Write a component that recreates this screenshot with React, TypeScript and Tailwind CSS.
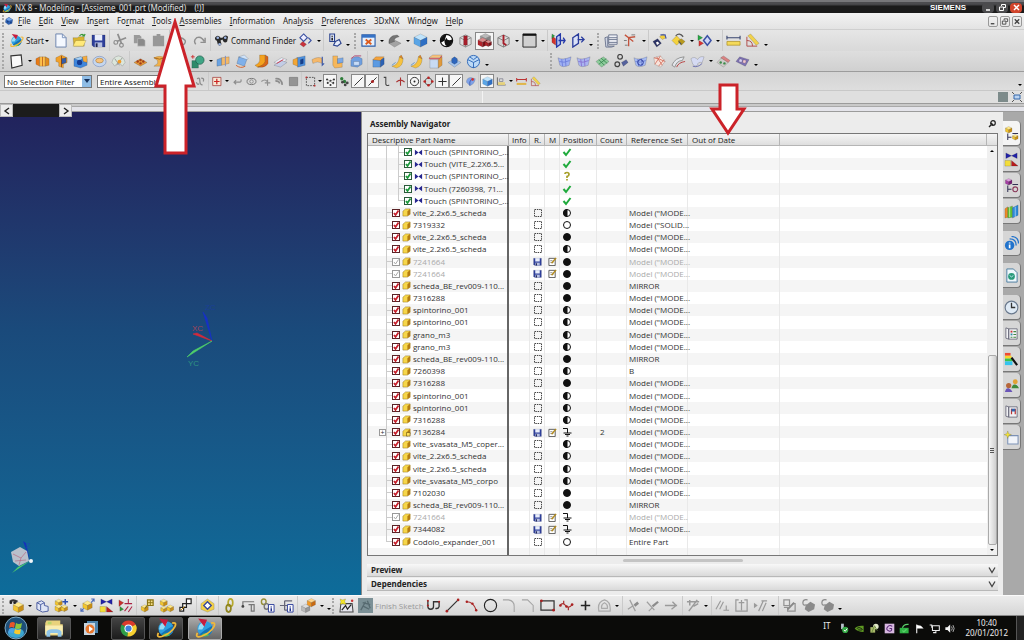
import { ReactNode } from "react";
import clsx from "clsx";

const BLUE = ["#bfe3fb", "#5aa5e6", "#2e6fc4"];
const GOLD = ["#ffe98a", "#f3c52e", "#c98f14"];
const ORANGE = ["#ffd48a", "#f59a23", "#c96a10"];
const GRAY = ["#b9b9b9", "#9b9b9b", "#858585"];
const RED = ["#d98b8b", "#b3232b", "#7d1219"];

function cube(x: number, y: number, s: number, [top, left, right]: string[]) {
  const h = s / 2;
  return (
    <g stroke="#00000055" strokeWidth="0.4">
      <path fill={top} d={`M${x} ${y - s}L${x + s} ${y - h}L${x} ${y}L${x - s} ${y - h}Z`} />
      <path fill={left} d={`M${x - s} ${y - h}L${x} ${y}V${y + s}L${x - s} ${y + h}Z`} />
      <path fill={right} d={`M${x + s} ${y - h}L${x} ${y}V${y + s}L${x + s} ${y + h}Z`} />
    </g>
  );
}

function line(d: string, stroke = "#333", strokeWidth = 1.2, fill = "none") {
  return <path d={d} stroke={stroke} strokeWidth={strokeWidth} fill={fill} />;
}

function fill(d: string, color: string) {
  return <path d={d} fill={color} stroke="#00000066" strokeWidth="0.4" />;
}

function dots(points: number[][], color: string, r = 1.1) {
  return points.map(([x, y]) => <circle key={`${x}-${y}`} cx={x} cy={y} r={r} fill={color} />);
}

const sheet = (a: string, b: string) => (
  <>
    {fill("M1 4Q6 7 15 3L13 12Q6 15 3 12Z", a)}
    {line("M5 5.5L6 13M9 5L9.500 13M2.500 8Q7 10 13.500 7", b, 0.9)}
  </>
);

const icons: Record<string, ReactNode> = {
  nx: (
    <>
      <circle cx="8" cy="8.500" r="5.500" fill="#2d9fe0" />
      <path d="M4 12.500Q8 9 13 6.500Q14.500 12 9.500 13.800Q6 14.500 4 12.500Z" fill="#1571b5" />
      <path d="M4.500 5Q7 3 9 4L6 9L3 9Q3 6.500 4.500 5Z" fill="#9adcf5" />
      <path d="M5 13.500Q8 10 11 13Q8 15 5 13.500Z" fill="#4fbf57" />
      <path d="M3 1L9.500 2L7.500 7Z" fill="#c51d3e" />
      <path d="M12.500 4.500Q16 3.500 14.500 7Q12 11.500 5.500 14Q0.500 15.500 2.500 11.500" stroke="#f0b93a" strokeWidth="1.300" fill="none" />
    </>
  ),
  part: (
    <>
      {fill("M3 5L8 2L14 6L13 12L7 14L2 10Z", "#2d62b5")}
      {fill("M3 5L8 2L14 6L8 8Z", "#77aaf0")}
      {dots([[6, 9], [11, 10]], "#183d80", 1.4)}
    </>
  ),
  new: (
    <>
      {fill("M3 1H10L14 5V15H3Z", "#f4f8ff")}
      {line("M3 1H10L14 5V15H3ZM10 1V5H14", "#7b93bd", 1)}
    </>
  ),
  open: (
    <>
      {fill("M1 5H6L7 4H13V14H2Z", "#d9b431")}
      {fill("M4 8H15L12 14H1Z", "#ffe97a")}
      {line("M8 3Q11 0 13 3L14 1M13 3H11", "#3a9a3a", 1.3)}
    </>
  ),
  save: (
    <>
      {fill("M1 2H15V15H3L1 13Z", "#2e3f9a")}
      <path d="M4 2H12V8H4Z" fill="#e9eefb" />
      <path d="M4 10H12V15H4Z" fill="#b6bfe0" />
      <path d="M5 11H7V15H5Z" fill="#1c2350" />
    </>
  ),
  cut: (
    <>
      {line("M5 1L9 11M14 5L4 9", "#8e8e8e", 1.8)}
      <circle cx="3" cy="10" r="2" stroke="#8e8e8e" strokeWidth="1.300" fill="none" />
      <circle cx="9" cy="13" r="2" stroke="#8e8e8e" strokeWidth="1.300" fill="none" />
    </>
  ),
  copy: (
    <>
      <path d="M2 2H8L10 4V11H2Z" fill="#9a9a9a" />
      <path d="M6 6H12L14 8V14H6Z" fill="#8a8a8a" stroke="#ccc" strokeWidth="0.500" />
    </>
  ),
  paste: <path d="M2 3H6V1H10V3H14V14H2Z" fill="#979797" />,
  undo: line("M3 4V8H7M3 8Q8 2 13 8Q14 11 10 13", "#8e8e8e", 1.5),
  redo: line("M14 5V10H9M13 9Q10 3 5 5Q1 8 4 12", "#8e8e8e", 1.5),
  binoculars: (
    <>
      <path d="M1 5Q4 1 7 5H9Q12 1 15 4L14 9Q12 11 10 9L9 7L7 8L8 12Q6 15 4 12L3 8Q1 8 1 5Z" fill="#2a2a2a" />
      {dots([[4, 5], [12, 5], [6, 12]], "#9db4e0", 1.4)}
    </>
  ),
  diamonds: (
    <>
      {line("M6 1L10 5L6 9L2 5Z", "#3a4fa0", 1.2, "#eef")}
      {line("M11 5L14 8L11 11", "#3a4fa0", 1.2)}
      {fill("M5 9L9 12L6 15L2 12Z", "#c8323c")}
    </>
  ),
  info: (
    <>
      {line("M3 1H8V9H3ZM9 9L13 7L15 11L11 14L7 13Z", "#28408c", 1.2, "#e6ecfa")}
      {line("M5.500 3V4M5.500 5V8", "#111", 1.6)}
    </>
  ),
  fit: (
    <>
      <path d="M1 2H15V14H1Z" fill="#e8f1fc" stroke="#2b5ca8" strokeWidth="1.200" />
      <path d="M1 2H15V5H1Z" fill="#3572c6" />
      {line("M5 7L11 12M11 7L5 12", "#dd5a1c", 2)}
    </>
  ),
  shade: (
    <>
      {fill("M2 11L9 8L15 11L8 15Z", "#a3a3a3")}
      {fill("M2 11Q1 6 6 3L11 2L13 4Q7 5 8 9Z", "#747474")}
    </>
  ),
  blueCube: cube(8, 8, 7, BLUE),
  ball: (
    <>
      <circle cx="8" cy="8" r="6.500" fill="#fff" stroke="#111" strokeWidth="1.300" />
      <path d="M8 1.500A6.500 6.500 0 0 0 2 10Q6 9 8 5Q9 9 14 7A6.500 6.500 0 0 1 9 14.500Q5 12 6 8Z" fill="#111" />
    </>
  ),
  clip: (
    <>
      {line("M2 5L8 2L14 5V12L8 15L2 12ZM2 5L8 8L14 5M8 8V15", "#888", 0.9, "#ddd")}
      {fill("M6 3H10V13H6Z", "#a81e2a")}
    </>
  ),
  clipRed: (
    <>
      {cube(9, 6, 5.5, GRAY)}
      {cube(6, 10, 5, RED)}
      {cube(12, 11, 3.5, RED)}
    </>
  ),
  clipAxis: (
    <>
      {line("M2 5L8 2L14 5V12L8 15L2 12ZM2 5L8 8L14 5M8 8V15", "#777", 0.9, "#d4d4d4")}
      {line("M8 2V11L11 13", "#a81e2a", 2)}
    </>
  ),
  window: (
    <>
      <path d="M1 1H15V15H1Z" fill="#d0d0d0" stroke="#222" />
      <path d="M1 1H15V3H1Z" fill="#111" />
    </>
  ),
  planeRed: (
    <>
      {fill("M1 3L5 6V13L1 10Z", "#d5342c")}
      {fill("M1 1L4 3L1 6Z", "#2ea043")}
      {line("M6 4L10 1V12L6 15ZM8 8H15M13 5L15 8L13 11", "#2438a8", 1.4, "#b9c6f2")}
    </>
  ),
  plane: line("M3 5L9 1V11L3 15ZM8 7H15M12 4L15 7L12 10", "#2a3c9c", 1.4, "#dbe2f7"),
  layers: (
    <>
      {line("M5 2H14V12H5ZM5 5H14M5 7H14M5 10H14", "#6d7690", 1, "#eef0f6")}
      {line("M1 5L4 4V14H11L8 15H2Z", "#6d7690", 1, "#cfd5e3")}
    </>
  ),
  csys: (
    <>
      {line("M6 14V5L13 4M6 5L2 2M6 5L11 9", "#c4533c", 1.4)}
      {line("M9 2H13M1 8H4M2 13H5", "#777", 1)}
    </>
  ),
  hide: (
    <>
      {fill("M1 9L6 6L10 11L5 15Z", "#2a3166")}
      {fill("M4 10L6 9L8 11L5.500 13Z", "#fff")}
      {fill("M8 4L12 1L15 5L11 7Z", "#f1cf3e")}
      {line("M9 2L14 2L15 6", "#4456a8", 1.2)}
    </>
  ),
  show: (
    <>
      {fill("M1 8L6 3L11 8L6 13Z", "#f4d23e")}
      {fill("M8 8L11 6L15 9L11 13Z", "#b99a1e")}
      {line("M5 3Q9 -1 13 4M8 9L11 12", "#555", 1.3)}
    </>
  ),
  move: (
    <>
      {fill("M1 2L6 5L1 8Z", "#28a745")}
      {fill("M2 8L7 11L2 14Z", "#d33")}
      {line("M11 3L15 8L11 13L7 8Z", "#3c51a5", 1.6, "#cfd8f6")}
    </>
  ),
  measure: (
    <>
      <path d="M1 9H15V13H1Z" fill="#f4da5a" stroke="#a98a1a" strokeWidth="0.700" />
      {line("M1 5H15M1 3V7M15 3V7", "#3a4670", 1.2)}
    </>
  ),
  angle: (
    <>
      {fill("M3 3L6 1L15 11L12 13Z", "#f1d24c")}
      {line("M2 4V14H13M2 8Q8 8 8 14", "#b04a48", 1)}
    </>
  ),
  sketch: line("M2 2L13 1L14 12L3 15Z", "#333", 1.2, "#fafafa"),
  extrude: (
    <>
      {fill("M1 5L5 3V13L1 11Z", "#e87a16")}
      {fill("M5 3H11V13H5Z", "#ffc04a")}
      {fill("M11 3L15 5V12L11 13Z", "#e08a1c")}
      {line("M8 3V13", "#b3541a", 0.8)}
    </>
  ),
  revolve: (
    <>
      {fill("M2 4L8 1L14 4V9L10 11V15L5 13V9L2 8Z", "#f2a12a")}
      {fill("M8 5L13 4V9L8 11Z", "#355ca8")}
      {line("M8 2V14", "#7a3a10", 0.8)}
    </>
  ),
  block: (
    <>
      {fill("M1 5L8 3L15 5V12L8 15L1 13Z", "#3f86dc")}
      {fill("M1 5L8 3L11 4L7 7Z", "#a9d2f6")}
      <circle cx="7" cy="9" r="2.800" fill="#143c94" />
      {fill("M10 3L15 2V9L11 8Z", "#f5ab3e")}
    </>
  ),
  ring: (
    <>
      <ellipse cx="8" cy="8" rx="7" ry="5.500" fill="#c4d6ef" stroke="#7f93bd" strokeWidth="0.700" />
      <ellipse cx="8" cy="7" rx="4" ry="2.500" fill="#f7c27c" stroke="#b0803a" strokeWidth="0.700" />
    </>
  ),
  dome: (
    <>
      {fill("M1 9Q2 3 8 2Q14 3 15 9L12 13Q8 6 4 13Z", "#dce6dc")}
      {line("M4 5L9 12M12 4L6 12", "#888", 0.8)}
      {dots([[9, 8]], "#f19c2a", 2)}
    </>
  ),
  pattern: (
    <>
      {fill("M1 9L8 5L15 9L8 13Z", "#e2993a")}
      {dots([[5, 8], [8, 6.5], [8, 10], [11, 8]], "#a13c1c", 1.3)}
    </>
  ),
  flange: (
    <>
      {fill("M2 4Q8 1 14 4L10 7V10L14 13H2L6 10V7Z", "#f0b04a")}
      {line("M2 4Q8 7 14 4", "#9a5c14", 0.9)}
    </>
  ),
  shell: cube(8, 8, 6.5, ORANGE),
  green: (
    <>
      {fill("M2 7H9V15H2Z", "#2f8a6a")}
      <circle cx="10.500" cy="6.500" r="4.500" fill="#3fa585" stroke="#1f5a48" strokeWidth="0.700" />
      {line("M1 3H5M3 1V5", "#c33", 1)}
    </>
  ),
  trim: (
    <>
      {fill("M1 6L6 4V12L1 13Z", "#6aa3e2")}
      {fill("M6 4L14 3V10L6 12Z", "#f3b969")}
      {line("M10 2V13", "#7c8cc0", 1)}
    </>
  ),
  draft: (
    <>
      {fill("M4 3L13 5L10 13L2 10Z", "#7fb0ea")}
      {fill("M4 3L10 1L14 5L13 6Z", "#cfe3fa")}
      {line("M1 12Q6 16 11 13", "#d5622a", 1)}
    </>
  ),
  blend: (
    <>
      {fill("M6 1L12 1V9Q10 13 4 14L1 12Q6 10 6 7Z", "#f4a21f")}
      {fill("M12 1L15 3V10Q12 15 4 14Q11 12 12 8Z", "#d7661c")}
    </>
  ),
  offset: (
    <>
      {fill("M1 9L9 4L15 6L8 11Z", "#e8ecf7")}
      {fill("M1 12L9 7L15 9L8 14Z", "#c3cde6")}
      {line("M4 10L11 6", "#c34", 1)}
    </>
  ),
  boss: (
    <>
      {fill("M5 4L14 2V12L6 14Z", "#4e90de")}
      {fill("M9 6L12 5V10L9 11Z", "#163f8e")}
      {fill("M1 6L6 4V13L1 11Z", "#f2a636")}
    </>
  ),
  pipe: (
    <>
      {fill("M1 6Q8 2 12 5V10Q7 7 2 10Z", "#f5b86a")}
      {line("M12 3V12L14 10", "#3a57a8", 1.2)}
    </>
  ),
  tube: (
    <>
      {fill("M3 2H8V10L13 9V14L5 15L3 12Z", "#f6b75b")}
      {fill("M8 5L14 4V9L8 10Z", "#7ba8e4")}
    </>
  ),
  roundBlue: (
    <>
      {fill("M2 7Q4 2 10 3L14 5V11L9 14L2 13Z", "#6f9fe0")}
      {fill("M5 8H11V12H5Z", "#c7dcf8")}
      {line("M2 5L6 2H13", "#b04a78", 1)}
    </>
  ),
  sync: (
    <>
      {fill("M2 6H10V14H2Z", "#5b9ae2")}
      {fill("M10 6L14 4V11L10 14Z", "#2c62b4")}
      {fill("M2 6L5 3L14 3L10 7Z", "#f5a33c")}
    </>
  ),
  curve: (
    <>
      {fill("M2 13Q9 12 10 3L14 5Q14 13 7 15Z", "#f6c240")}
      {fill("M10 3L12 1L14 5Z", "#e68923")}
      {line("M2 12L6 9", "#69c", 1)}
    </>
  ),
  resize: (
    <>
      {fill("M1 4L5 1H15L12 4Z", "#f8c27c")}
      {fill("M2 6H11V15H2Z", "#c8daf2")}
      {fill("M11 6L15 3V12L11 15Z", "#e09a3c")}
      {line("M1 5H12L15 2", "#c23", 0.8)}
    </>
  ),
  pad: (
    <>
      {fill("M1 9L8 5L15 9L8 14Z", "#a8c6ec")}
      {fill("M5 5L8 3L11 5V9L8 11L5 9Z", "#2e66bd")}
    </>
  ),
  globe: (
    <>
      <circle cx="8" cy="8" r="6.500" fill="#bcd9f6" stroke="#2e68b8" />
      {line("M2 6L8 9L14 6M8 9V15M4 3L8 6L12 3", "#2e68b8", 1)}
    </>
  ),
  surf: sheet("#9fb0f2", "#6b7ddb"),
  surf2: sheet("#a9b4f0", "#8670d0"),
  grid: (
    <>
      {fill("M1 8L9 3L15 8L7 14Z", "#8ccb9a")}
      {line("M4 6L10 12M6.500 4.500L13 10M4 11L12 5", "#2f7d4a", 0.8)}
    </>
  ),
  rings: (
    <>
      {line("M4 3A2.500 2.500 0 1 0 9 3A2.500 2.500 0 1 0 4 3M1 11A2.500 2.500 0 1 0 6 11A2.500 2.500 0 1 0 1 11", "#444", 1.3)}
      {fill("M8 9L13 6L15 9L10 13Z", "#55629e")}
    </>
  ),
  patch: (
    <>
      {sheet("#a6bbf4", "#6c7fd0")}
      <circle cx="8" cy="9" r="3" fill="none" stroke="#26369a" />
    </>
  ),
  mesh: (
    <>
      {fill("M2 4L9 2L14 8L9 14L3 11Z", "#f8e2da")}
      {line("M2 4Q8 5 14 8M3 11L9 2M5 3L11 12M7 13L13 6", "#d2705c", 0.9)}
    </>
  ),
  flow: (
    <>
      {line("M1 12Q4 4 14 3L12 7Q6 7 4 14Z", "#888", 0.9, "#e3e7ec")}
      {line("M6 14Q8 9 15 8", "#b84040", 1)}
    </>
  ),
  wing: (
    <>
      {fill("M1 5Q5 2 8 6Q10 2 15 3L13 9Q8 8 8 12Q5 14 3 11Z", "#d5daf3")}
      {line("M3 13Q8 15 13 10", "#6a6fb0", 1)}
    </>
  ),
  sew: (
    <>
      {fill("M1 9L6 4L13 9L8 14Z", "#cfccc9")}
      {fill("M5 4L8 2L15 7L13 9Z", "#d98282")}
      {dots([[5, 9], [9, 10]], "#3b8a4a", 1.3)}
    </>
  ),
  film: (
    <>
      {fill("M1 8L5 3L15 6L11 13Z", "#7f73b5")}
      {fill("M5 5L8 6L7 9L4 8Z", "#d5cdf2")}
      {fill("M9 6L12 7L11 10L8 9Z", "#f0c5cf")}
    </>
  ),
  grayLink: line("M3 4Q7 1 7 7T11 13M9 3Q14 3 12 8M2 9Q4 14 6 11", "#8c8c8c", 1.8),
  snap: (
    <>
      {line("M1 2H13V14H1Z", "#9c2c2c", 1, "#f5e7d4")}
      {line("M7 4V12M3 8H11", "#c22", 1.8)}
    </>
  ),
  back: line("M3 9H11Q14 9 13 5M6 6L3 9L6 12", "#8c8c8c", 1.7),
  lasso: (
    <>
      <ellipse cx="8" cy="8" rx="6.500" ry="4.500" fill="none" stroke="#777" strokeWidth="1.400" />
      <circle cx="8" cy="8" r="2.500" fill="#ddd" stroke="#777" />
    </>
  ),
  add: line("M2 8Q8 3 11 9M11 5V14M7 10H15", "#909090", 1.6),
  bend: line("M2 4Q11 3 12 13M2 7Q8 7 8 11", "#8c8c8c", 2.4),
  square: <path d="M2 2H14V14H2Z" fill="#949494" stroke="#777" />,
  marquee: (
    <>
      <path d="M2 2H14V14H2Z" fill="none" stroke="#555" strokeWidth="1.400" strokeDasharray="2.500 1.500" />
      {dots([[2, 2], [14, 14]], "#b33", 1.4)}
    </>
  ),
  points: (
    <>
      {dots([[4, 10], [8, 7], [12, 10], [8, 13], [3, 5], [13, 5]], "#333", 1.5)}
      {line("M4 10L12 5M4 5L13 12", "#777", 0.8)}
    </>
  ),
  pointsGreen: (
    <>
      {dots([[4, 4], [8, 8]], "#2f7d3a", 2.4)}
      {dots([[12, 10], [9, 13], [5, 9]], "#444", 2)}
    </>
  ),
  endpoint: line("M2 14L14 2", "#333", 1.4),
  midpoint: (
    <>
      {line("M2 14L14 2", "#333", 1.4)}
      {dots([[8, 8]], "#a22", 2.2)}
    </>
  ),
  control: line("M4 2H7V12Q8 15 12 13", "#444", 1.5),
  cross: line("M8 2V14M2 9Q8 3 14 9", "#a33", 1.6),
  center: (
    <>
      <circle cx="8" cy="8" r="6" fill="none" stroke="#222" strokeWidth="1.300" />
      {dots([[8, 8]], "#222", 1.4)}
    </>
  ),
  quadrant: (
    <>
      <circle cx="8" cy="8" r="5" fill="none" stroke="#555" strokeWidth="1.300" />
      {dots([[8, 2.5], [8, 13.5], [2.5, 8], [13.5, 8]], "#b22", 1.9)}
    </>
  ),
  plus: line("M8 2V14M2 8H14", "#333", 1.5),
  face: (
    <>
      {fill("M2 9Q2 2 9 2L15 4Q14 12 7 14Z", "#7fa2e8")}
      {line("M7 14Q6 8 9 5", "#3350a0", 1.1)}
      {dots([[11, 5]], "#c33", 2)}
    </>
  ),
  ruler: (
    <>
      {line("M2 2V13H14", "#666", 1.4)}
      <path d="M3 9H13V13H3Z" fill="#e6d27a" />
      {line("M5 4H10V8H5Z", "#778", 1)}
    </>
  ),
  dimension: (
    <>
      {line("M1 3V8M15 3V8M1 5H15", "#b33", 1.5)}
      <path d="M1 10H15V13H1Z" fill="#e0b64a" />
    </>
  ),
  goldFind: (
    <>
      {cube(10, 10, 5.5, GOLD)}
      {line("M1 4Q4 1 9 4", "#333", 2.4)}
      {dots([[2, 5], [6, 5]], "#222", 1.5)}
    </>
  ),
  wire: line("M2 5L7 3L10 5V8L14 9V14L8 15L2 12ZM2 5L6 7V13M6 7L10 5", "#4a5ca0", 1, "#dfe5f5"),
  addPart: (
    <>
      {cube(5, 5, 3.8, GOLD)}
      {cube(5, 11, 4, GOLD)}
      {cube(11, 11, 3.5, GOLD)}
      {line("M12 1V7M9 4H15", "#2b4fb0", 1.6)}
    </>
  ),
  movePart: (
    <>
      {cube(8, 8, 5, GOLD)}
      {line("M1 14L4 11M12 5L15 1M12 1H15V4M1 11V14H4", "#4a6ab8", 1.2)}
    </>
  ),
  constrain: (
    <>
      {fill("M2 1L8 4L2 7ZM14 1L8 4L14 7Z", "#2222a8")}
      {fill("M1 9H7V15H1Z", "#f3dd3a")}
      {fill("M8 9L15 15H8Z", "#b81c1c")}
    </>
  ),
  relations: (
    <>
      {fill("M1 2L6 5L1 9Z", "#c92f2f")}
      {fill("M2 9L6 12L2 14Z", "#2f9a3a")}
      {line("M7 6H15M11 1V6M7 14L11 9M11 15L15 9", "#a24", 1.1)}
    </>
  ),
  goldKey: (
    <>
      {cube(5, 11, 3.8, GOLD)}
      {line("M8 2H14V8H8ZM8 8L5 11", "#8a7414", 1.3, "#f4e08a")}
      {line("M11 2V8M8 5H14", "#8a7414", 1)}
    </>
  ),
  goldThree: (
    <>
      {cube(5, 5, 3.8, GOLD)}
      {cube(5, 12, 3.2, GOLD)}
      {cube(12, 11, 3.6, GOLD)}
    </>
  ),
  boxes: (
    <>
      {line("M9 1H14V6H9ZM5 6H9V10H5ZM2 10H6V14H2Z", "#222", 1.3, "#fff")}
      {line("M3 13L7 9", "#c80", 1)}
    </>
  ),
  box: (
    <>
      {fill("M1 6L8 1L15 6V12L8 15L1 12Z", "#f2d04a")}
      {line("M8 4L12 8L8 12L4 8Z", "#33449a", 1.4, "#fff")}
    </>
  ),
  chain: (
    <>
      <ellipse cx="9" cy="5" rx="2.500" ry="4" fill="none" stroke="#b5a82c" strokeWidth="1.800" />
      <ellipse cx="7" cy="11" rx="2.500" ry="4" fill="none" stroke="#8f8420" strokeWidth="1.800" />
    </>
  ),
  hook: (
    <>
      {line("M2 8V4H14M8 7H14V14H11V7", "#777", 1.3)}
      {dots([[2, 9]], "#444", 1.5)}
    </>
  ),
  chainInfo: (
    <>
      <ellipse cx="4" cy="4" rx="2.500" ry="3" fill="none" stroke="#96903a" strokeWidth="1.500" />
      <ellipse cx="7" cy="9" rx="2.500" ry="3" fill="none" stroke="#777" strokeWidth="1.500" />
      <path d="M9 7H15V15H9Z" fill="#fff" stroke="#2a3c9a" />
      {line("M12 9V10M12 11V14", "#22328c", 1.6)}
    </>
  ),
  treeInfo: (
    <>
      {line("M1 8H6M6 3V13M6 3H14M6 8H9M6 13H9", "#667", 1.3)}
      <path d="M9 7H15V15H9Z" fill="#fff" stroke="#2a3c9a" />
      {line("M12 9V10M12 11V14", "#22328c", 1.6)}
    </>
  ),
  explode: (
    <>
      {cube(5, 11, 4.5, ["#ddd", "#bbb", "#999"])}
      {cube(11, 5, 4.4, ORANGE)}
    </>
  ),
  sketchEdit: (
    <>
      {line("M2 6H14L15 15H1Z", "#444", 1.1, "#e7e7ef")}
      {line("M3 13L7 8L9 12L13 7", "#222", 1.3)}
      {fill("M1 1L4 2L7 1L6 4L8 7L4 6L1 7L2 4Z", "#f4e62a")}
      {dots([[14, 3]], "#c33", 1.3)}
    </>
  ),
  flag: (
    <>
      <path d="M0 0H16V16H0Z" fill="#7b9096" />
      {line("M3 13L8 4M5 5L13 7M6 9L12 12M10 3L13 11", "#566a70", 1.4)}
    </>
  ),
  profile: (
    <>
      {line("M2 3V9Q2 12 5 12Q8 12 8 9V4H14V9Q13 12 10 11", "#333", 1.4)}
      {dots([[2, 3], [14, 4], [2, 8]], "#a22")}
    </>
  ),
  lineTool: (
    <>
      {line("M2 14L14 2", "#333", 1.3)}
      {dots([[2, 14], [14, 2]], "#a22", 1.4)}
    </>
  ),
  arc: (
    <>
      {line("M3 4Q10 4 13 13", "#a33", 1.3)}
      {dots([[3, 4], [9, 6], [13, 13]], "#a22", 1.3)}
    </>
  ),
  circle: <circle cx="8" cy="8" r="6.500" fill="none" stroke="#222" strokeWidth="1.200" />,
  fillet: line("M1 2H7Q13 3 13 9V15", "#a5a5a5", 1.1),
  chamfer: line("M1 2H7L13 8V15", "#a5a5a5", 1.1),
  rect: (
    <>
      {line("M1 3H15V13H1Z", "#333", 1.3)}
      {dots([[1.5, 3], [14.5, 13]], "#a22", 1.5)}
    </>
  ),
  spline: (
    <>
      {line("M1 8Q4 4 7 8T14 7M5 3V6M10 10V13", "#a33", 1.3)}
      {dots([[1.5, 8], [8, 9], [14, 7]], "#a22", 1.4)}
    </>
  ),
  point: line("M8 3V13M3 8H13", "#222", 1.7),
  region: line("M2 14Q0 4 8 2Q15 4 14 14ZM5 11Q4 7 8 5Q12 7 11 11Z", "#aaa", 1.3),
  quickTrim: (
    <>
      {line("M4 2L10 14M2 12L8 8", "#a0a0a0", 1.3)}
      {line("M9 8L13 5", "#8c8c8c", 3)}
    </>
  ),
  quickExt: (
    <>
      {line("M2 4L10 13M4 14L8 10", "#a0a0a0", 1.3)}
      {line("M8 9L14 4", "#8c8c8c", 2.4)}
    </>
  ),
  corner: line("M1 8H14M9 4L13 8L8 12", "#9a9a9a", 1.4),
  dim: line("M1 4H14M4 2V8M3 14L12 2M8 9L13 6", "#9a9a9a", 1.6),
  parallel: line("M1 12L6 3M5 12L9 4M9 13H15M12 8V13", "#9a9a9a", 1.2),
  symmetric: line("M5 2H2V14H14V2H11M8 2V13M5 5H11", "#9a9a9a", 1.3),
  infer: (
    <>
      <path d="M1 5L5 8L1 11Z" fill="#9a9a9a" />
      {line("M6 14L11 3M10 14L14 5M9 3H15", "#9a9a9a", 1.3)}
    </>
  ),
  convert: (
    <>
      {line("M2 2H8V8H2ZM2 10H6V14H14V6H11", "#929292", 1.3)}
      {line("M6 12L13 5", "#888", 2)}
    </>
  ),
  animate: (
    <>
      {line("M7 2Q2 1 2 5T6 7", "#8a8a8a", 1.3)}
      <path d="M5 8L10 4L15 7L14 12L8 15L4 12Z" fill="#8a8a8a" />
    </>
  ),
  folder: (
    <>
      <path d="M2 2H13V5H15V14H1V4Z" fill="#e9d27c" />
      <path d="M1 6H15V13H1Z" fill="#f9edb0" />
      <path d="M3 3H6V5H3Z" fill="#b7d66a" />
      <path d="M2 15V11Q3 9 6 9H10Q13 9 14 11V15H11V12H5V15Z" fill="#8fc4e8" />
    </>
  ),
  media: (
    <>
      <path d="M4 1H15V13H4Z" fill="#4c83ac" />
      <path d="M1 3H12V15H1Z" fill="#c8d5df" />
      <circle cx="7" cy="9" r="4.500" fill="#e8762c" />
      <path d="M6 6L10 9L6 12Z" fill="#fff" />
    </>
  ),
  chrome: (
    <>
      <path d="M8 8L2.200 4.600A6.800 6.800 0 0 1 14 4.700Z" fill="#db3b2b" />
      <path d="M8 8L2.200 4.600A6.800 6.800 0 0 0 7 14.700Z" fill="#2f9e48" />
      <path d="M8 8L14 4.700A6.800 6.800 0 0 1 7 14.700Z" fill="#f6cf2f" />
      <circle cx="8" cy="8" r="3.400" fill="#fff" />
      <circle cx="8" cy="8" r="2.600" fill="#3f7fdb" />
    </>
  ),
  tree: (
    <>
      {cube(5, 4, 3.5, GOLD)}
      {cube(12, 12, 3, GOLD)}
      {line("M4 8V15M4 12H8M9 8H15", "#335", 1.1)}
    </>
  ),
  treePink: (
    <>
      {cube(5, 4, 3.5, ["#e0a0e0", "#a83ca8", "#772277"])}
      {line("M4 8V15M4 12H8M9 7H15", "#335", 1.1)}
      <circle cx="12" cy="12" r="2.600" fill="none" stroke="#8a3a5a" strokeWidth="1.200" />
    </>
  ),
  books: (
    <>
      {fill("M1 5L4 3V14L1 15Z", "#ee8a28")}
      {fill("M4 4L9 2V14L4 15Z", "#63c132")}
      {fill("M9 4L15 1V12L9 15Z", "#2d8ad8")}
      {line("M12 3V14M6 3V14", "#ffffffaa", 0.8)}
    </>
  ),
  broadcast: (
    <>
      <circle cx="6" cy="10" r="5" fill="#2173cc" />
      {line("M6 7V8M6 9V13", "#fff", 1.8)}
      {line("M6 3Q13 3 13 10M8 0.500Q15.500 1 15.500 8", "#2173cc", 1.4)}
    </>
  ),
  webDoc: (
    <>
      {fill("M3 1H10L14 5V15H3Z", "#eef7fc")}
      {line("M3 1H10L14 5V15H3Z", "#5b8db0", 1)}
      <circle cx="8" cy="9" r="3.600" fill="#2a9a7a" />
      {line("M6 8Q8 11 10 8", "#bfe8f4", 1)}
    </>
  ),
  clock: (
    <>
      <circle cx="8" cy="8" r="6.800" fill="#dfeaf5" stroke="#69788c" strokeWidth="1.200" />
      {line("M8 3V8H12", "#333", 1.4)}
    </>
  ),
  palette: (
    <>
      {line("M2 2L5 3V14L2 13ZM5 3H14V14H5Z", "#667", 0.9, "#f3f4f7")}
      <path d="M7 5H9V7H7Z" fill="#c33" />
      <path d="M7 8H9V10H7Z" fill="#38a" />
      {line("M10 6H13M10 9H13M10 12H13M7 12H9", "#484", 1.2)}
    </>
  ),
  rainbow: (
    <>
      <path d="M1 1H7V4H1Z" fill="#ef4a32" />
      <path d="M1 4H8V7H1Z" fill="#f8d52c" />
      <path d="M1 7H9V10H1Z" fill="#3cc24a" />
      <path d="M1 10H9V14H1Z" fill="#35c3ef" />
      {line("M8 6L14 14", "#111", 2.4)}
    </>
  ),
  people: (
    <>
      <circle cx="12" cy="4" r="2.600" fill="#e2a233" />
      <path d="M8 11Q9 6 12 7T16 11Z" fill="#3f8a3a" />
      <circle cx="5" cy="8" r="2.800" fill="#b6663a" />
      <path d="M1 15Q2 10 5 11T9 15Z" fill="#6a55b8" />
    </>
  ),
  roles: (
    <>
      {line("M2 2L5 3V14L2 13ZM5 3H14V14H5Z", "#667", 0.9, "#f0f1f4")}
      {line("M8 5V11M12 5V11", "#b33", 1.3)}
      <path d="M8 5H12V8H8Z" fill="#36a" />
    </>
  ),
  starDoc: (
    <>
      {line("M4 6H15V15H4Z", "#7c91b5", 1.1, "#f1f4fa")}
      {fill("M4 1L5 4L8 5L5 6L4 9L3 6L0 5L3 4Z", "#f2e13a")}
    </>
  ),
  usb: (
    <>
      <path d="M3 1H7V9H3Z" fill="#b9c3cc" />
      <circle cx="9" cy="10" r="4.500" fill="#33a844" />
      {line("M7 10L9 12L12 8", "#fff", 1.4)}
    </>
  ),
  nvidia: (
    <>
      <path d="M1 8Q5 3 14 4V13Q5 13 1 8Z" fill="#5f9a22" />
      {line("M4 8Q7 5 11 8T6 10", "#111", 1.2)}
    </>
  ),
  plant: (
    <>
      <circle cx="10" cy="5" r="4" fill="#e3e9c8" />
      <path d="M2 6H9V14H2Z" fill="#a9b96a" />
      {line("M4 14L8 4L12 11", "#6a8a3a", 1.3)}
    </>
  ),
  swirl: (
    <>
      <path d="M1 1H15V15H1Z" fill="#d8b8e0" />
      {line("M12 5Q8 2 5 6T8 12Q12 12 11 8H8", "#5a2a78", 1.5)}
    </>
  ),
  drive: (
    <>
      <path d="M1 7H14V15H1Z" fill="#2fb344" />
      {line("M5 7Q7 1 14 2M5 11L7 13L11 9", "#5ad06a", 1.8)}
    </>
  ),
  whiteFlag: (
    <>
      <path d="M4 3L10 4L14 8H4Z" fill="#fff" />
      {line("M4 2V15", "#fff", 1.5)}
    </>
  ),
  network: line("M5 4H15V11H5ZM1 3H4V7M10 11V14H6", "#eee", 1.5),
  speaker: (
    <>
      <path d="M2 6H5L9 2V14L5 10H2Z" fill="#f4f4f4" />
      {line("M11 5Q13 8 11 11M13 3Q16.500 8 13 13", "#ccc", 1.2)}
    </>
  ),
};

function Icon({ name, className }: { name: string; className?: string }) {
  return (
    <svg viewBox="0 0 16 16" className={clsx("shrink-0", className)} aria-hidden="true">
      {icons[name]}
    </svg>
  );
}

// "v" drop-down arrow, "," overflow arrow, "|" divider, ":" drag handle, "!" before a name = pressed
function Tools({ items, small = false }: { items: string; small?: boolean }) {
  return (
    <div className="flex shrink-0 items-center self-stretch">
      {items.split(" ").map((item, index) => {
        if (item === "v" || item === ",") {
          return (
            <span
              key={index}
              className={clsx("flex shrink-0 justify-center", small ? "w-[6px]" : "w-[7px]", item === "," && "self-end pb-[5px]")}
            >
              <span className="border-x-2 border-t-2 border-x-transparent border-t-black" />
            </span>
          );
        }
        if (item === "|") {
          return <span key={index} className="mx-px w-px shrink-0 self-stretch bg-[#cacaca]" />;
        }
        if (item === ":") {
          return <span key={index} className="mr-[3px] h-4 shrink-0 border-l-2 border-dotted border-[#a8a8a8]" />;
        }
        const pressed = item.startsWith("!");
        const name = pressed ? item.slice(1) : item;
        return (
          <button
            key={index}
            type="button"
            aria-label={name}
            className={clsx(
              "flex shrink-0 items-center justify-center",
              small ? "h-[14px] w-[14px]" : "h-[18px] w-[19px]",
              pressed && "border border-[#888] bg-[#f6f6f6]"
            )}
          >
            <Icon name={name} className={small ? "size-[11px]" : "size-[15px]"} />
          </button>
        );
      })}
    </div>
  );
}

const menus = [
  ["", "F", "ile"],
  ["", "E", "dit"],
  ["", "V", "iew"],
  ["In", "s", "ert"],
  ["Fo", "r", "mat"],
  ["", "T", "ools"],
  ["", "A", "ssemblies"],
  ["", "I", "nformation"],
  ["Ana", "l", "ysis"],
  ["", "P", "references"],
  ["3DxNX", "", ""],
  ["Wind", "o", "w"],
  ["", "H", "elp"],
];

function WindowGlyph({ kind }: { kind: string }) {
  return (
    <svg viewBox="0 0 9 9" className="size-[9px]" fill="none" stroke="currentColor" aria-hidden="true">
      {kind === "Minimize" && <path d="M2 7H6" strokeWidth="1.500" />}
      {kind === "Restore" && <path d="M3.500 3V1.500H7.500V4.500H6M1.500 4H5.500V7.500H1.500Z" />}
      {kind === "Close" && <path d="M2 2L7 7M7 2L2 7" strokeWidth="1.500" />}
    </svg>
  );
}

function TitleBar() {
  return (
    <header className="flex h-[13px] items-center border-t-2 border-[#77777a] bg-linear-to-b from-[#4c4c4f] from-20% to-[#1b1b1b] to-40% pl-[2px] font-['Noto_Sans','Liberation_Sans',sans-serif] text-[8px] text-[#e2e2e2]">
      <Icon name="nx" className="size-[10px]" />
      <h1 className="ml-[3px] whitespace-pre">
        {"NX 8 - Modeling - [Assieme_001.prt (Modified)    (!)]"}
      </h1>
      <span className="mr-4 ml-auto font-['Liberation_Sans',sans-serif] font-bold text-white">SIEMENS</span>
      {["Minimize", "Restore", "Close"].map((kind) => (
        <button
          key={kind}
          type="button"
          aria-label={kind}
          className={clsx(
            "mr-[2px] flex h-[10px] w-3 items-center justify-center rounded-sm text-white",
            kind === "Close" ? "bg-[#d2452c]" : "bg-[#4b4b4d]"
          )}
        >
          <WindowGlyph kind={kind} />
        </button>
      ))}
    </header>
  );
}

function MenuBar() {
  return (
    <nav className="flex h-[17px] items-center border-b border-[#cfcfcf] bg-linear-to-b from-[#f3f3f3] to-[#e3e3e3] pr-[2px] pl-[2px] font-['Noto_Sans','Liberation_Sans',sans-serif] text-[8px] text-[#222]">
      <span className="h-3 border-l-2 border-dotted border-[#a8a8a8]" />
      <Icon name="part" className="size-[10px]" />
      <div className="ml-1 flex flex-1 gap-2">
        {menus.map(([before, key, after]) => (
          <button key={before + key + after} type="button">
            {before}
            <span className="underline">{key}</span>
            {after}
          </button>
        ))}
      </div>
      {["Minimize", "Restore", "Close"].map((kind) => (
        <button
          key={kind}
          type="button"
          aria-label={`${kind} part`}
          className="ml-[2px] flex h-[11px] w-[10px] items-center justify-center rounded-xs border border-[#999] text-[#444]"
        >
          <WindowGlyph kind={kind} />
        </button>
      ))}
    </nav>
  );
}

function FilterSelect({ label, value }: { label: string; value: string }) {
  return (
    <div className="grid w-[88px] shrink-0">
      <select
        aria-label={label}
        className="col-start-1 row-start-1 h-[13px] appearance-none border border-[#777] bg-white pl-[2px] font-['Open_Sans','Liberation_Sans',sans-serif] text-[8px] leading-[11px] text-[#111]"
      >
        <option>{value}</option>
      </select>
      <span className="pointer-events-none col-start-1 row-start-1 m-px flex w-[9px] items-center justify-center justify-self-end bg-[#8fbde6]">
        <span className="border-x-3 border-t-4 border-x-transparent border-t-[#14305c]" />
      </span>
    </div>
  );
}

function Ribbon() {
  return (
    <div className="bg-[#dcdcdc] font-['Noto_Sans','Liberation_Sans',sans-serif] text-[8px] text-[#222]">
      <div className="flex h-[21px] items-center gap-[3px] bg-linear-to-b from-[#e6e6e6] to-[#d9d9d9] pl-[2px]">
        <div className="flex items-center self-stretch">
          <Tools items=": nx" />
          <button type="button">Start</button>
          <Tools items="v new open save | cut copy paste | undo redo | binoculars" />
          <button type="button">Command Finder</button>
          <Tools items="diamonds v | info ," />
        </div>
        <Tools items=": fit v shade v blueCube v ball clip !clipRed clipAxis v window v | planeRed plane ," />
        <Tools items=": layers csys v | hide show v move v | measure angle ," />
      </div>
      <div className="flex h-[21px] items-center border-b border-[#9c9c9c] bg-linear-to-b from-[#dedede] to-[#d0d0d0] pl-[2px]">
        <Tools items=": sketch v extrude revolve block ring dome | pattern flange shell green v trim draft blend offset boss pipe tube roundBlue | sync curve curve resize pad globe ," />
        <div className="ml-[60px] flex self-stretch">
          <Tools items=": surf surf2 grid rings patch mesh flow wing v sew film ," />
        </div>
      </div>
      <div className="flex h-[18px] items-center bg-linear-to-b from-[#d4d4d4] to-[#dedede] pl-1">
        <FilterSelect label="Selection filter" value="No Selection Filter" />
        <div className="mr-2 ml-[5px]">
          <FilterSelect label="Selection scope" value="Entire Assembly" />
        </div>
        <Tools
          small
          items="grayLink | snap v back lasso add bend square | marquee v !points pointsGreen !endpoint !midpoint control cross !center quadrant !plus !endpoint face | !blueCube ruler v dimension angle"
        />
        <span className="mt-2 mr-[2px] ml-auto border-x-2 border-t-2 border-x-transparent border-t-black" />
      </div>
      <div className="flex h-[13px] items-center justify-end gap-1 border-t border-[#c8c8c8] bg-[#dfdfdf] pr-[2px]">
        <span className="mr-auto ml-[482px] w-px self-stretch bg-[#f3f3f3]" />
        <span className="size-[10px] bg-[#7d8b8b]" />
        <svg viewBox="0 0 10 10" className="size-[10px]" fill="none" stroke="#3566a8" aria-hidden="true">
          <path d="M2 3H8V7H2Z" fill="#b9d3f2" />
          <path d="M0 0L2 2M10 0L8 2M0 10L2 8M10 10L8 8" stroke="#555" />
        </svg>
      </div>
      <div className="relative h-[9px] border-y border-[#9b9b9b] bg-[#e4e4ea] shadow-[inset_0_2px_0_#c9c9c9,inset_0_3px_0_#a9a9a9]">
        <div className="absolute top-0 left-0 z-10 flex h-[13px] w-[72px] bg-[#1c1c1c] text-[#222]">
          <button type="button" aria-label="Scroll left" className="flex w-[13px] items-center justify-center border border-[#bbb] bg-[#ececec]">
            <svg viewBox="0 0 8 8" className="size-2" fill="none" stroke="currentColor" strokeWidth="1.400">
              <path d="M6 1L2 4L6 7" />
            </svg>
          </button>
          <button type="button" aria-label="Scroll right" className="ml-auto flex w-[13px] items-center justify-center border border-[#bbb] bg-[#ececec]">
            <svg viewBox="0 0 8 8" className="size-2" fill="none" stroke="currentColor" strokeWidth="1.400">
              <path d="M2 1L6 4L2 7" />
            </svg>
          </button>
        </div>
      </div>
    </div>
  );
}

interface Part {
  name: string;
  kind?: "touch" | "assembly";
  position: "check" | "question" | "half" | "full" | "empty" | "ground";
  refSet?: string;
  saved?: boolean;
  muted?: boolean;
  count?: string;
}

const MODEL = 'Model ("MODE...';

const parts: Part[] = [
  { name: "Touch (SPINTORINO_...", kind: "touch", position: "check" },
  { name: "Touch (VITE_2.2X6.5...", kind: "touch", position: "check" },
  { name: "Touch (SPINTORINO_...", kind: "touch", position: "question" },
  { name: "Touch (7260398, 71...", kind: "touch", position: "check" },
  { name: "Touch (SPINTORINO_...", kind: "touch", position: "check" },
  { name: "vite_2.2x6.5_scheda", position: "half", refSet: MODEL },
  { name: "7319332", position: "empty", refSet: 'Model ("SOLID...' },
  { name: "vite_2.2x6.5_scheda", position: "full", refSet: MODEL },
  { name: "vite_2.2x6.5_scheda", position: "half", refSet: MODEL },
  { name: "7241664", position: "full", refSet: MODEL, saved: true, muted: true },
  { name: "7241664", position: "full", refSet: MODEL, saved: true, muted: true },
  { name: "scheda_BE_rev009-110...", position: "full", refSet: "MIRROR" },
  { name: "7316288", position: "full", refSet: MODEL },
  { name: "spintorino_001", position: "half", refSet: MODEL },
  { name: "spintorino_001", position: "half", refSet: MODEL },
  { name: "grano_m3", position: "half", refSet: MODEL },
  { name: "grano_m3", position: "half", refSet: MODEL },
  { name: "scheda_BE_rev009-110...", position: "full", refSet: "MIRROR" },
  { name: "7260398", position: "half", refSet: "B" },
  { name: "7316288", position: "full", refSet: MODEL },
  { name: "spintorino_001", position: "half", refSet: MODEL },
  { name: "spintorino_001", position: "half", refSet: MODEL },
  { name: "7316288", position: "half", refSet: MODEL },
  { name: "7136284", kind: "assembly", position: "ground", refSet: MODEL, saved: true, count: "2" },
  { name: "vite_svasata_M5_coper...", position: "half", refSet: MODEL },
  { name: "vite_2.2x6.5_scheda", position: "half", refSet: MODEL },
  { name: "vite_2.2x6.5_scheda", position: "half", refSet: MODEL },
  { name: "vite_svasata_M5_corpo", position: "half", refSet: MODEL },
  { name: "7102030", position: "full", refSet: MODEL },
  { name: "scheda_BE_rev009-110...", position: "full", refSet: "MIRROR" },
  { name: "7241664", position: "ground", refSet: 'Model ("MODE..', saved: true, muted: true },
  { name: "7344082", position: "ground", refSet: MODEL, saved: true },
  { name: "Codolo_expander_001", position: "empty", refSet: "Entire Part" },
];

function PositionMark({ position }: { position: Part["position"] }) {
  return (
    <svg viewBox="0 0 10 10" className="ml-[2px] size-[10px]" fill="none" stroke="#111" aria-label={position}>
      {position === "check" && <path d="M1.500 5L4 8L8.500 2" stroke="#1faa3c" strokeWidth="2" />}
      {position === "question" && <path d="M3 3Q3 1.500 5 1.500T7 3.500Q7 5 5 5.500V7M5 8V9.500" stroke="#a8a02a" strokeWidth="1.700" />}
      {(position === "half" || position === "full" || position === "empty") && (
        <circle cx="5" cy="5" r="3.500" fill={position === "full" ? "#111" : "#fff"} />
      )}
      {position === "half" && <path d="M5 1.500A3.500 3.500 0 0 0 5 8.500Z" fill="#111" />}
      {position === "ground" && <path d="M1 1.500H5.500V6M1.500 6H9.500M3 7.500H8M4.500 9H6.500" />}
    </svg>
  );
}

function PartName({ part, index, last }: { part: Part; index: number; last: boolean }) {
  const touch = part.kind === "touch";
  return (
    <div className="flex h-full items-center">
      <span className="flex w-[18px] shrink-0 self-stretch">
        {part.kind === "assembly" && (
          <span className="ml-auto flex size-[7px] items-center justify-center self-center border border-[#999] bg-white text-[7px] leading-none">+</span>
        )}
      </span>
      <span className={clsx("w-px shrink-0 bg-[#ccc]", last ? "h-1/2 self-start" : "self-stretch")} />
      {touch && (
        <span className={clsx("ml-[11px] w-px shrink-0 bg-[#ccc]", index === 4 ? "h-1/2 self-start" : "self-stretch")} />
      )}
      <span className="h-px w-[5px] shrink-0 bg-[#ccc]" />
      <span className="grid size-2 shrink-0">
        <input
          type="checkbox"
          id={`part-${index}`}
          defaultChecked
          className={clsx(
            "col-start-1 row-start-1 size-2 appearance-none border bg-white",
            part.muted ? "border-[#999]" : touch ? "border-[#2a5a3a]" : "border-[#5a2226]"
          )}
        />
        <svg viewBox="0 0 8 8" className="pointer-events-none col-start-1 row-start-1 size-2" fill="none">
          <path
            d="M2 4L3.500 6L6.500 1.500"
            stroke={part.muted ? "#aaa" : touch ? "#1d9a3c" : "#c8202c"}
            strokeWidth={part.muted ? 1 : 1.8}
          />
        </svg>
      </span>
      <svg viewBox="0 0 10 10" className="ml-[2px] size-[9px] shrink-0" aria-hidden="true">
        {touch ? (
          <path d="M1 2L5 5L1 8ZM9 2L5 5L9 8Z" fill="#26268e" />
        ) : (
          <>
            <path d="M1 3.500L4 1H9V7L6 9H1Z" fill="#f6d649" stroke="#8a6a10" strokeWidth="0.500" />
            <path d="M6 3.500L9 1V7L6 9Z" fill="#b47c12" />
            {part.kind === "assembly" && <path d="M5 5H9V9H5Z" fill="#ffe15a" stroke="#6a5010" strokeWidth="0.700" />}
          </>
        )}
      </svg>
      <label htmlFor={`part-${index}`} className={clsx("whitespace-nowrap", touch ? "ml-px" : "ml-[2px]")}>
        {part.name}
      </label>
    </div>
  );
}

const columns = [
  { title: "Descriptive Part Name", width: "w-[141px]", pad: "pl-1" },
  { title: "Info", width: "w-[21px]", pad: "pl-[3px]" },
  { title: "R.", width: "w-[15px]", pad: "pl-1" },
  { title: "M", width: "w-[15px]", pad: "pl-1" },
  { title: "Position", width: "w-[37px]", pad: "pl-[3px]" },
  { title: "Count", width: "w-[30px]", pad: "pl-[3px]" },
  { title: "Reference Set", width: "w-[61px]", pad: "pl-1" },
  { title: "Out of Date", width: "w-[92px]", pad: "pl-1" },
  { title: "", width: "", pad: "" },
];

const cell = "border-r border-[#e9e9e9] p-0";

function PartTable() {
  return (
    <table className="h-full w-full table-fixed border-separate border-spacing-0 text-[8px] leading-[10px] text-[#333]">
      <colgroup>
        {columns.map((column) => (
          <col key={column.title} className={column.width} />
        ))}
        <col className="w-[10px]" />
      </colgroup>
      <thead>
        <tr className="h-3 bg-linear-to-b from-[#f5f5f5] to-[#dcdcdc] text-[#222]">
          {columns.map((column) => (
            <th key={column.title} className={clsx("border-r border-b border-[#b5b5b5] py-0 pr-0 text-left font-normal whitespace-nowrap", column.pad)}>
              {column.title}
            </th>
          ))}
          <th className="border-b border-[#b5b5b5] p-0" />
        </tr>
      </thead>
      <tbody>
        {parts.map((part, index) => (
          <tr key={index} className={clsx(index % 2 ? "bg-[#f5f5f5]" : "bg-white")}>
            <td className="border-r-2 border-[#666] p-0">
              <div className={clsx("h-full", part.muted && "text-[#aaa]")}>
                <PartName part={part} index={index} last={index === parts.length - 1} />
              </div>
            </td>
            <td className={cell} />
            <td className={cell}>
              {part.kind !== "touch" && !part.saved && (
                <svg viewBox="0 0 8 8" className="ml-1 size-2" aria-hidden="true">
                  <path d="M0.500 0.500H7.500V7.500H0.500Z" fill="none" stroke="#444" strokeDasharray="1.500 0.833" />
                </svg>
              )}
              {part.saved && <Icon name="save" className="ml-[3px] size-[9px]" />}
            </td>
            <td className={cell}>
              {part.saved && (
                <svg viewBox="0 0 10 10" className="ml-[3px] size-[9px]" fill="none" aria-label="modified">
                  <path d="M1 1.500H8V9.500H1Z" fill="#fff" stroke="#555" />
                  <path d="M2.500 4H5M2.500 6H6" stroke="#777" strokeWidth="0.800" />
                  <path d="M4 7L9 1" stroke="#b28a1c" strokeWidth="1.600" />
                </svg>
              )}
            </td>
            <td className={cell}>
              <PositionMark position={part.position} />
            </td>
            <td className={clsx(cell, "pl-[3px]")}>{part.count}</td>
            <td className={clsx(cell, "pl-[2px] whitespace-nowrap", part.muted && "text-[#aaa]")}>{part.refSet}</td>
            <td className={cell} />
            <td className="p-0" />
            {index === 0 && (
              <td rowSpan={parts.length + 1} className="bg-[#f0f0f0] p-0">
                <div className="flex h-full flex-col items-center">
                  <span className="mt-1 border-x-2 border-b-2 border-x-transparent border-b-black" />
                  <span className="min-h-0 flex-1" />
                  <span className="flex h-[190px] w-[9px] flex-col items-center justify-center gap-px rounded-xs border border-[#aaa] bg-linear-to-r from-[#f6f6f6] to-[#cfcfcf]">
                    <span className="h-px w-1 bg-[#555]" />
                    <span className="h-px w-1 bg-[#555]" />
                    <span className="h-px w-1 bg-[#555]" />
                  </span>
                  <span className="my-1 border-x-2 border-t-2 border-x-transparent border-t-black" />
                </div>
              </td>
            )}
          </tr>
        ))}
        <tr className="h-[7px] bg-[#f5f5f5]">
          <td className="border-r-2 border-[#666] p-0" />
          {columns.slice(1).map((column) => (
            <td key={column.title} className={column.title ? cell : "p-0"} />
          ))}
        </tr>
      </tbody>
    </table>
  );
}

function Navigator() {
  return (
    <section className="flex min-w-0 flex-1 flex-col border-l border-[#8a8a8a] bg-[#ececec] pr-[5px] pl-[5px] text-[8px] text-[#222]">
      <div className="flex h-[21px] items-center pt-[2px] pr-[2px] pl-[3px] font-['Noto_Sans','Liberation_Sans',sans-serif]">
        <h2 className="font-bold">Assembly Navigator</h2>
        <button type="button" aria-label="Pin" className="ml-auto">
          <svg viewBox="0 0 8 8" className="size-2" fill="none" stroke="#222">
            <circle cx="5" cy="3" r="2.300" strokeWidth="1.200" />
            <path d="M3 3L5 5M1 7L3 5" strokeWidth="1.400" />
          </svg>
        </button>
      </div>
      <div className="min-h-0 flex-1 border border-[#777] bg-white">
        <PartTable />
      </div>
      <div className="flex h-2 items-center justify-center">
        <span className="h-[3px] w-[120px] rounded-sm bg-[#c4c4c4]" />
      </div>
      {["Preview", "Dependencies"].map((title) => (
        <button
          key={title}
          type="button"
          className="mb-px flex h-[13px] items-center justify-between border-b border-[#b8b8b8] bg-linear-to-b from-[#f8f8f8] to-[#dadada] pr-[2px] pl-1 font-['Noto_Sans','Liberation_Sans',sans-serif] font-bold"
        >
          {title}
          <svg viewBox="0 0 8 8" className="size-2" fill="none" stroke="#444" strokeWidth="1.300">
            <path d="M1 1.500L4 6.500L7 1.500" />
          </svg>
        </button>
      ))}
      <div className="h-[3px]" />
    </section>
  );
}

const resourceTabs = [
  ["tree", "constrain", "treePink", "books"],
  ["broadcast"],
  ["webDoc"],
  ["clock", "palette", "rainbow", "people", "roles", "starDoc"],
];

function ResourceBar() {
  return (
    <aside className="flex w-[21px] shrink-0 flex-col gap-[7px] bg-[#a9a9a9] pt-[9px]">
      {resourceTabs.map((group) => (
        <div key={group[0]} className="flex w-[18px] flex-col gap-px">
          {group.map((name) => (
            <button
              key={name}
              type="button"
              aria-label={name}
              className={clsx(
                "flex h-[25px] items-center justify-center rounded-r-sm border-r border-b border-[#777]",
                name === "tree" ? "bg-[#f4f4f4]" : "bg-[#d6d6d6]"
              )}
            >
              <Icon name={name} className="size-[15px]" />
            </button>
          ))}
        </div>
      ))}
    </aside>
  );
}

function Viewport() {
  return (
    <main className="relative w-[361px] shrink-0 bg-linear-to-b from-[#21225c] via-[#1a4a7b] via-45% to-[#0d6c9a]">
      <svg viewBox="0 0 50 80" className="absolute top-[188px] left-[180px] h-20 w-[50px]" aria-label="Coordinate system">
        <path d="M32 41L23 12L27 18Z" fill="#1530c8" stroke="#1530c8" strokeWidth="0.600" />
        <path d="M32 41L13 34L17 33Z" fill="#d42a3a" stroke="#d42a3a" strokeWidth="0.600" />
        <path d="M32 41L7 57L13 51Z" fill="#4fcf6a" stroke="#4fcf6a" strokeWidth="0.600" />
        <g fontSize="8" fontFamily="Liberation Sans, sans-serif">
          <text x="12" y="31" fill="#a14358">XC</text>
          <text x="8" y="66" fill="#2f9482">YC</text>
          <text x="25" y="10" fill="#1b3f96">ZC</text>
        </g>
      </svg>
      <svg viewBox="0 0 32 36" className="absolute bottom-[20px] left-[6px] h-9 w-8" aria-label="View triad">
        <path d="M24 22L17 2L20 4Z" fill="#1634b8" />
        <path d="M24 22L6 34L12 28Z" fill="#4fcf6a" />
        <path d="M5 13L14 8L21 12L23 22L13 27L7 23Z" fill="#b9c0cc" />
        <path d="M7 15L15 19L20 13M15 19L13 26M9 22L20 21" fill="none" stroke="#b56a84" strokeWidth="0.700" />
        <circle cx="25" cy="22" r="2" fill="#f2f6fa" />
        <text x="20" y="9" fontSize="7" fontFamily="Liberation Sans, sans-serif" fill="#1a4fb0">Z</text>
      </svg>
    </main>
  );
}

function SketchBar() {
  return (
    <div className="flex h-[21px] shrink-0 items-center border-t border-b border-t-[#fafafa] border-b-[#888] bg-linear-to-b from-[#ececec] to-[#d6d6d6] pl-[2px] text-[8px] text-[#999]">
      <Tools items=": goldFind v wire addPart v movePart constrain relations | goldKey goldThree boxes | box | chain hook chainInfo treeInfo | explode v ," />
      <Tools items=": sketchEdit flag" />
      <button type="button">Finish Sketch</button>
      <Tools items="profile lineTool arc circle fillet chamfer rect spline point region v | quickTrim quickExt corner | dim v | parallel symmetric infer v | convert animate animate ," />
    </div>
  );
}

const trayIcons = ["usb", "nvidia", "plant", "swirl", "drive", "whiteFlag", "network", "speaker"];

function Taskbar() {
  const task = "flex h-[23px] w-[34px] items-center justify-center rounded-xs border";
  return (
    <footer className="flex h-6 shrink-0 items-center bg-[#0b0b09] pl-1 font-['Noto_Sans','Liberation_Sans',sans-serif] text-[8px] text-[#eee]">
      <button type="button" aria-label="Start menu" className="mr-[9px]">
        <svg viewBox="0 0 24 24" className="size-6">
          <circle cx="12" cy="12" r="11" fill="#1d4f78" stroke="#7fa9c4" />
          <ellipse cx="12" cy="17" rx="8" ry="5" fill="#3aa6d0" />
          <path d="M6 7Q9 5 11 7L10 12Q8 10 5 12Z" fill="#e8572a" />
          <path d="M12 7Q15 9 18 7L17 12Q14 14 11 12Z" fill="#8cc63e" />
          <path d="M5 13Q8 11 10 13L9 17Q7 16 4 17Z" fill="#4aa3e8" />
          <path d="M11 13Q14 15 17 13L16 18Q13 19 10 17Z" fill="#f7c82e" />
        </svg>
      </button>
      <button type="button" aria-label="Explorer" className={clsx(task, "border-[#555] bg-linear-to-b from-[#555] to-[#222]")}>
        <Icon name="folder" className="size-5" />
      </button>
      <button type="button" aria-label="Media Player" className="flex w-[40px] justify-center">
        <Icon name="media" className="size-4" />
      </button>
      <button type="button" aria-label="Chrome" className={clsx(task, "border-[#555] bg-linear-to-b from-[#444] to-[#1c1c1c]")}>
        <Icon name="chrome" className="size-[19px]" />
      </button>
      <button type="button" aria-label="NX window" className={clsx(task, "ml-1 border-[#555] bg-linear-to-b from-[#555] to-[#222]")}>
        <Icon name="nx" className="size-[22px]" />
      </button>
      <button type="button" aria-label="NX modeling window" className={clsx(task, "ml-[5px] border-[#aaa] bg-linear-to-b from-[#aaa] to-[#666]")}>
        <Icon name="nx" className="size-[22px]" />
      </button>
      <span className="-mt-1 mr-[9px] ml-auto">IT</span>
      <div className="flex items-center gap-1">
        {trayIcons.map((name) => (
          <Icon key={name} name={name} className="size-[11px]" />
        ))}
      </div>
      <time className="mr-2 ml-[10px] text-center leading-[10px]">
        10:40
        <br />
        20/01/2012
      </time>
      <button type="button" aria-label="Show desktop" className="h-full w-2 border-l border-[#555] bg-[#222]" />
    </footer>
  );
}

export default function App() {
  return (
    <div className="relative flex h-screen flex-col overflow-hidden bg-[#dcdcdc] font-['Open_Sans','Liberation_Sans',sans-serif]">
      <TitleBar />
      <MenuBar />
      <Ribbon />
      <div className="flex min-h-0 flex-1">
        <Viewport />
        <Navigator />
        <ResourceBar />
      </div>
      <SketchBar />
      <Taskbar />

      <svg viewBox="0 0 44 138" className="pointer-events-none absolute top-[18px] left-[153px] z-20 h-[138px] w-11" aria-hidden="true">
        <path d="M22 4L41 68H33V135H12V68H3Z" fill="#fff" stroke="#cb2229" strokeWidth="3" />
      </svg>
      <svg viewBox="0 0 38 54" className="pointer-events-none absolute top-[82px] left-[709px] z-20 h-[54px] w-[38px]" aria-hidden="true">
        <path d="M11 3H28V27H35L19 51L3 27H11Z" fill="#fff" stroke="#cb2229" strokeWidth="3" />
      </svg>
    </div>
  );
}
